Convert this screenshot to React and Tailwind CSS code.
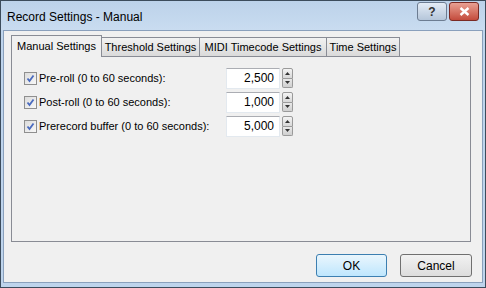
import React from "react";

const Spinner = () => (
  <div className="flex flex-col w-[11px] h-[20px] ml-[2px]">
    <div className="flex-1 flex items-center justify-center bg-gradient-to-b from-[#f4f4f4] to-[#d8d8d8] border border-[#9a9a9a] rounded-t-[2px]">
      <svg width="5" height="3" viewBox="0 0 5 3"><path d="M0 3 L2.5 0 L5 3 Z" fill="#333" /></svg>
    </div>
    <div className="flex-1 flex items-center justify-center bg-gradient-to-b from-[#e8e8e8] to-[#d0d0d0] border border-t-0 border-[#9a9a9a] rounded-b-[2px]">
      <svg width="5" height="3" viewBox="0 0 5 3"><path d="M0 0 L2.5 3 L5 0 Z" fill="#333" /></svg>
    </div>
  </div>
);

const Check = () => (
  <div className="w-[13px] h-[13px] border border-[#8f8f8f] bg-gradient-to-br from-[#dcdcdc] to-[#f8f8f8] flex items-center justify-center">
    <svg width="9" height="9" viewBox="0 0 9 9">
      <path d="M1.5 4.5 L3.5 7 L7.5 1.5" fill="none" stroke="#4a6bbf" strokeWidth="1.8" />
    </svg>
  </div>
);

const Row = ({ label, value }) => (
  <div className="flex items-center h-[20px]">
    <Check />
    <span className="ml-[2px] w-[187px]">{label}</span>
    <div className="w-[54px] h-[21px] bg-white border border-[#e3e9ef] border-t-[#abadb3] flex items-center justify-end pr-[5px] text-black text-[12px]">
      {value}
    </div>
    <Spinner />
  </div>
);

const Tab = ({ label, active, w }) =>
  active ? (
    <div className={`h-[22px] ${w} justify-center flex items-center bg-[#f0f0f0] border border-b-0 border-[#898c95] -mb-px relative z-10 text-black`}>
      {label}
    </div>
  ) : (
    <div className={`h-[19px] ${w} justify-center flex items-center bg-gradient-to-b from-[#f2f2f2] to-[#dadada] border border-b-0 border-l-0 border-[#898c95] text-black`}>
      {label}
    </div>
  );

export default function App() {
  return (
    <div
      className="w-[486px] h-[288px] bg-[#bed4ec] border border-[#3c4c5c] flex flex-col overflow-hidden text-[11px]"
      style={{ fontFamily: "'Liberation Sans', Arial, sans-serif" }}
    >
      {/* Title bar */}
      <div className="h-[29px] flex items-start bg-gradient-to-b from-[#bcd2ea] to-[#c9dcf0] px-[6px]">
        <span className="mt-[7px] text-[12px] text-black">Record Settings - Manual</span>
        <div className="ml-auto flex mt-[1px] gap-[2px]">
          <div className="w-[30px] h-[19px] rounded-[3px] border border-[#6d7d92] bg-gradient-to-b from-[#e4ecf6] to-[#b5c6da] flex items-center justify-center text-[#333] font-bold text-[12px]">
            ?
          </div>
          <div className="w-[30px] h-[19px] rounded-[3px] border border-[#7a2a24] bg-gradient-to-b from-[#e8a093] to-[#c34a3c] flex items-center justify-center">
            <svg width="11" height="9" viewBox="0 0 11 9">
              <path d="M1.5 1 L9.5 8 M9.5 1 L1.5 8" stroke="#fff" strokeWidth="2.4" />
            </svg>
          </div>
        </div>
      </div>

      {/* Client area */}
      <div className="flex-1 mx-[2px] mb-[4px] bg-[#f0f0f0] border border-[#8aa0bc] flex flex-col px-[7px] pt-[4px]">
        <div className="flex items-end">
          <Tab label="Manual Settings" active w="w-[91px]" />
          <Tab label="Threshold Settings" w="w-[98px]" />
          <Tab label="MIDI Timecode Settings" w="w-[127px]" />
          <Tab label="Time Settings" w="w-[73px]" />
        </div>
        <div className="h-[186px] w-[460px] border border-[#898c95] bg-[#f0f0f0] pl-[12px] pt-[11px] flex flex-col gap-[4px] text-black">
          <Row label="Pre-roll (0 to 60 seconds):" value="2,500" />
          <Row label="Post-roll (0 to 60 seconds):" value="1,000" />
          <Row label="Prerecord buffer (0 to 60 seconds):" value="5,000" />
        </div>
        <div className="flex justify-end gap-[13px] mt-[12px] pr-[3px]">
          <div className="w-[71px] h-[23px] rounded-[3px] border border-[#3c7fb1] bg-gradient-to-b from-[#eaf6fd] to-[#bee6fd] flex items-center justify-center text-black text-[12px]">
            OK
          </div>
          <div className="w-[72px] h-[23px] rounded-[3px] border border-[#707070] bg-gradient-to-b from-[#f2f2f2] to-[#dddddd] flex items-center justify-center text-black text-[12px]">
            Cancel
          </div>
        </div>
      </div>
    </div>
  );
}
